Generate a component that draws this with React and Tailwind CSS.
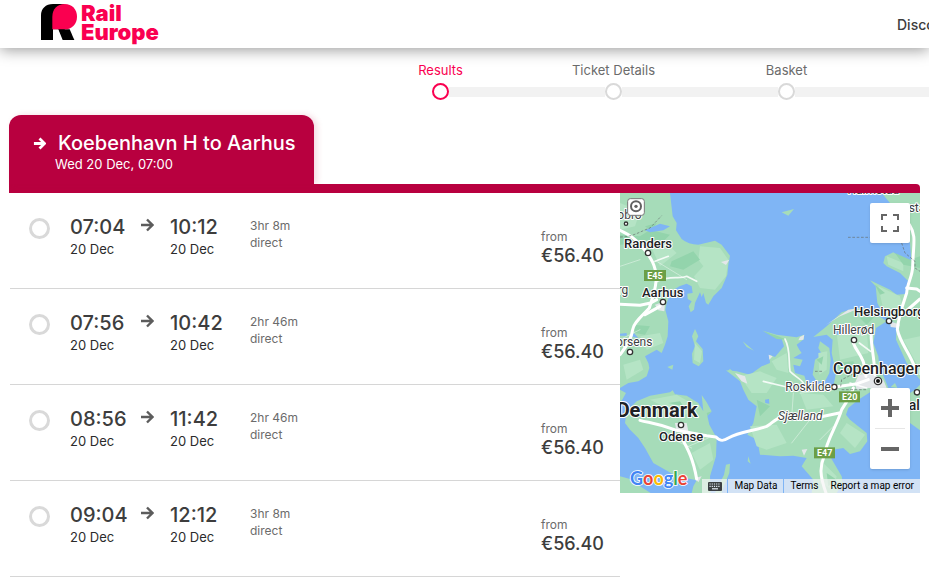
const steps = [
  { label: 'Results', active: true },
  { label: 'Ticket Details', active: false },
  { label: 'Basket', active: false },
];

const journeys = [
  { id: 1, depart: '07:04', arrive: '10:12', date: '20 Dec', duration: '3hr 8m', price: '€56.40' },
  { id: 2, depart: '07:56', arrive: '10:42', date: '20 Dec', duration: '2hr 46m', price: '€56.40' },
  { id: 3, depart: '08:56', arrive: '11:42', date: '20 Dec', duration: '2hr 46m', price: '€56.40' },
  { id: 4, depart: '09:04', arrive: '12:12', date: '20 Dec', duration: '3hr 8m', price: '€56.40' },
];

function Arrow({ className }) {
  return (
    <svg viewBox="0 0 14 14" className={className} fill="none" stroke="currentColor" aria-hidden="true">
      <path d="M1 7h11M7 1.5l5.5 5.5L7 12.5" />
    </svg>
  );
}

function Logo() {
  return (
    <a href="#" className="flex items-start gap-1 pt-1 text-[#fa0050]">
      <svg viewBox="0 0 108 108" className="size-9" aria-hidden="true">
        <path d="M0 108V34C0 14 14 0 36 0h34v75L100 108H65L52 76H36v32z" fill="#000" />
        <path d="M53 76h33l14 32H68z" fill="#000" />
        <path d="M34 76V38C34 15 49 0 71 0s37 16 37 38-15 38-37 38z" fill="#fa0050" />
      </svg>
      <span className="flex flex-col text-[22px] font-black leading-[19px]">
        <span>Rail</span>
        <span>Europe</span>
      </span>
    </a>
  );
}

function Header() {
  return (
    <header className="relative flex h-12 items-start justify-between bg-white pl-[41px] shadow-[0_2px_14px_rgba(0,0,0,0.4)]">
      <Logo />
      <nav className="w-8 overflow-hidden whitespace-nowrap pt-[15px] text-sm font-medium text-[#3d3d3d]">
        <a href="#">Discover</a>
      </nav>
    </header>
  );
}

function Stepper() {
  return (
    <ol className="flex overflow-hidden pl-[354px] pt-3">
      {steps.map((step, i) => (
        <li key={step.label} className="flex w-[173px] shrink-0 flex-col items-center">
          <span className={step.active ? 'pb-[2px] text-[13px] leading-[21px] text-[#fa0050]' : 'pb-[2px] text-[13px] leading-[21px] text-[#6b6b6b]'}>
            {step.label}
          </span>
          <div className="flex w-full items-center">
            <span className={i === 0 ? 'h-[10px] flex-1' : 'h-[10px] flex-1 bg-[#f2f2f2]'} />
            <span
              className={
                step.active
                  ? 'size-[17px] rounded-full border-2 border-[#fa0050] bg-white'
                  : 'size-[17px] rounded-full border-2 border-[#d9d9d9] bg-white'
              }
            />
            <span className="h-[10px] flex-1 bg-[#f2f2f2]" />
          </div>
        </li>
      ))}
      <li className="flex flex-1 flex-col justify-end" aria-hidden="true">
        <div className="flex h-[17px] items-center">
          <span className="h-[10px] flex-1 bg-[#f2f2f2]" />
        </div>
      </li>
    </ol>
  );
}

function Journey({ journey }) {
  return (
    <li className="border-b border-[#d6d6d6]">
      <label className="flex h-[95px] items-start pl-[19px] pr-4">
        <input
          type="radio"
          name="journey"
          className="mr-5 mt-[25px] size-[21px] shrink-0 appearance-none rounded-full border-3 border-[#d9d9d9] bg-white"
        />
        <span className="flex w-[70px] flex-col pt-5">
          <span className="text-xl leading-7 font-medium text-[#3d3d3d]">{journey.depart}</span>
          <span className="text-[13px] leading-4 text-[#2b2b2b]">{journey.date}</span>
        </span>
        <Arrow className="mr-4 mt-[25px] size-[14px] stroke-[2.4] text-[#5c5c5c]" />
        <span className="flex w-20 flex-col pt-5">
          <span className="text-xl leading-7 font-medium text-[#3d3d3d]">{journey.arrive}</span>
          <span className="text-[13px] leading-4 text-[#2b2b2b]">{journey.date}</span>
        </span>
        <span className="flex flex-col pt-6 text-xs leading-[17px] text-[#6b6b6b]">
          <span>{journey.duration}</span>
          <span>direct</span>
        </span>
        <span className="ml-auto flex flex-col pt-9">
          <span className="text-xs leading-4 text-[#6b6b6b]">from</span>
          <span className="text-lg leading-[22px] font-medium text-[#3d3d3d]">{journey.price}</span>
        </span>
      </label>
    </li>
  );
}

const roads = [
  'M0 112 C25 125 40 130 65 160 C90 190 112 220 108 265 C105 300 95 320 88 345 C65 370 40 390 38 410 C35 440 15 465 0 485',
  'M0 334 L60 337 L92 330 L110 320',
  'M120 340 L75 365',
  'M60 682 C90 690 110 690 170 712 L260 728 L288 732 C300 745 310 745 325 735 C360 715 400 715 440 700 C460 690 460 678 490 672 L600 672 L658 660',
  'M185 735 C205 770 220 800 230 858',
  'M700 585 L690 610 L665 650 C650 700 620 740 612 790 C600 820 598 845 618 900',
  'M645 582 L712 572 L745 560',
  'M700 450 C710 480 735 490 738 550',
  'M755 410 C748 440 762 480 765 545',
  'M868 95 C890 130 880 150 878 220 C878 250 862 270 860 300 C850 330 835 370 832 410 C840 450 870 480 885 525',
  'M860 285 L890 288 L900 295',
  'M852 360 L900 318',
];

const thinRoads = [
  'M105 205 L145 190 M112 265 C150 245 180 260 200 250 L230 265',
  'M495 438 C512 470 505 500 510 535 C525 550 545 560 550 570',
  'M430 565 L500 582 M718 450 L752 475 M690 570 L740 585',
];

const faintRoads =
  'M205 760L265 735M215 765L150 735M515 675L520 600M515 750L570 680M0 220L60 200M110 205L200 260M0 440L60 410M540 600L640 590M640 700L600 740';

function MapDrawing() {
  return (
    <svg viewBox="0 0 900 900" className="block h-full w-full" role="img" aria-label="Map">
      <rect width="900" height="900" fill="#7fb5f5" />
      <g fill="#a6dcb9">
        <path d="M0 0H150L158 70 170 90 168 112 185 138Q205 155 235 155L285 143 305 155 330 188 325 215 322 245 305 285 280 310 265 335 258 330 250 300 245 312 240 298 225 330 222 350 212 358 206 340 215 325 203 318 202 302 218 300 215 280 200 272 178 280 165 288 160 305 148 310 140 330 136 350 145 385 143 430 135 455 125 480 110 470 75 490 85 510 88 525 80 550 55 565 25 570 0 585Z" />
        <path d="M0 590L18 600 8 618 0 630Z" />
        <path d="M15 690L20 655 50 625 90 608 150 598 158 592 165 604 200 608 235 630 250 655 245 606 260 628 275 655 262 668 268 695 290 735 288 790 270 850 272 900 215 900 220 880 230 862 170 850 100 810 75 765 55 735 30 710Z" />
        <path d="M225 408L235 430 228 445 248 468 250 505 236 520 218 510 216 482 225 460 216 430Z" />
        <path d="M318 532L350 535 390 545 425 520 450 510 448 485 465 492 492 460 485 437 425 412 470 425 530 433 552 425 552 438 530 455 538 470 545 480 520 495 548 500 540 520 520 515 525 540 553 548 560 570 590 576 640 580 648 540 635 480 638 440 620 425 580 432 620 400 665 358 700 347 740 345 800 385 768 405 760 450 775 490 778 520 795 560 805 585 755 595 715 620 685 645 678 665 690 680 740 720 742 745 720 775 690 783 670 765 640 770 630 790 665 850 668 870 650 900H575L580 860 545 820 560 795 520 788 480 790 420 785 412 740 382 725 400 690 410 640 385 620 370 590 360 565Z" />
        <path d="M600 445L628 465 632 500 628 540 615 565 590 565 578 545 585 500 607 485 595 465Z" />
        <path d="M785 0L810 30 840 90 870 150 875 215 860 205 820 178 795 190 790 210 800 220 840 240 865 265 868 285 855 303 830 305 810 290 750 262 767 280 772 330 790 365 830 395 828 440 860 510 900 560V0Z" />
        <path d="M900 575L885 590 870 600V690L900 712Z" />
        <path d="M0 850L30 858 60 880 92 900H0ZM485 58L522 48 505 68ZM368 445L402 473 380 462ZM142 522L160 515 157 530ZM322 535L330 528 345 540ZM330 812L328 840 312 878 305 900H285L312 845 318 815ZM825 570L832 585 812 582ZM385 790L392 812 383 805Z" />
      </g>
      <g fill="#b5e4c5">
        <path d="M240 160L300 165 325 200 318 250 285 290 240 285 222 250 250 220 235 200ZM0 30L60 55 45 100 0 110ZM95 165L140 150 170 180 120 220ZM60 430L120 420 130 450 80 470ZM10 515L60 500 70 530 20 560Z" />
        <path d="M360 550L420 535 470 555 440 600 395 600ZM455 505L500 480 505 540 470 530ZM390 700L470 695 500 750 440 770 410 760ZM540 600L610 605 640 640 560 650ZM650 420L740 400 745 480 660 500ZM680 690L735 725 705 765 660 720ZM600 800L650 850 640 890 600 870ZM595 480L622 475 620 530 598 545Z" />
        <path d="M90 620L170 605 230 640 190 670ZM215 780L270 750 280 800 240 830ZM225 450L246 475 240 510 222 500ZM775 280L840 310 850 350 790 350ZM800 190L850 210 850 235 805 215ZM850 440L900 430V530Z" />
      </g>
      <g fill="#93d4ac">
        <path d="M0 125L60 130 90 110 150 125 130 145 70 150 0 155ZM155 205L220 175 240 200 190 230 150 220ZM75 100L110 90 95 115ZM40 395L90 400 75 425 45 420ZM430 415L475 430 500 440 470 438ZM650 510L700 505 710 530 660 535ZM500 560L530 575 520 590ZM620 840L650 860 625 880Z" />
        <path d="M825 180L870 200 900 190V225L850 215ZM410 620L450 640 420 670ZM720 375L765 370 740 395ZM590 500L610 490 605 515ZM145 630L180 625 190 640ZM260 660L275 655 262 668ZM765 275L795 300 780 305Z" />
      </g>
      <g fill="#e4e7ea">
        <path d="M303 207L328 200 318 216ZM105 335L135 325 133 355 115 352ZM705 570L715 545 755 540 790 560 800 585 745 585 710 590ZM345 540L375 550 382 572 365 565ZM540 432L553 425 550 440 535 442ZM165 690L200 690 205 715 170 718ZM545 770L562 768 552 788ZM810 385L840 395 835 405 812 402ZM225 855L245 850 235 868ZM446 485L458 490 448 500ZM618 395L685 350 720 345 660 370Z" />
      </g>
      <path d="M75 112L120 92 150 100 130 112 90 118ZM435 620L447 618 448 632 436 630ZM648 415L662 410 665 425 650 425ZM30 430L42 420 55 435ZM0 422L20 420V428H0Z" fill="#7fb5f5" />
      <g fill="none" stroke="#fff" strokeLinecap="round" strokeLinejoin="round">
        <path d={faintRoads} strokeWidth="3" opacity="0.4" />
        {thinRoads.map((d) => <path key={d} d={d} strokeWidth="5" opacity="0.85" />)}
        {roads.map((d) => <path key={d} d={d} strokeWidth="9" />)}
      </g>
      <g fill="none" stroke="#666f70" strokeWidth="2" strokeDasharray="8 5">
        <path d="M0 132C40 132 60 115 90 105L125 68M684 133H750M845 150L855 180 885 205 885 225 900 235M662 580L665 560 705 540M665 590H740M585 535H608" />
      </g>
      <g fill="#fff" stroke="#333" strokeWidth="4">
        <circle cx="18" cy="92" r="5" />
        <circle cx="84" cy="180" r="8" />
        <circle cx="129" cy="327" r="8" />
        <circle cx="30" cy="477" r="8" />
        <circle cx="183" cy="696" r="8" />
        <circle cx="702" cy="441" r="8" />
        <circle cx="807" cy="384" r="8" />
        <circle cx="643" cy="582" r="8" />
        <circle cx="891" cy="598" r="8" />
        <circle cx="774" cy="564" r="11" />
      </g>
      <circle cx="774" cy="564" r="6" fill="#111" />
      <g className="font-['Roboto',sans-serif]" fill="#202124" stroke="#fff" strokeWidth="6" strokeLinejoin="round" paintOrder="stroke">
        <g fontSize="39" fontWeight="500">
          <text x="12" y="164">Randers</text>
          <text x="66" y="311">Aarhus</text>
          <text x="117" y="743">Odense</text>
          <text x="702" y="368">Helsingborg</text>
        </g>
        <g fontSize="36" fill="#3c4043">
          <text x="65" y="78" textAnchor="end">Hobro</text>
          <text x="25" y="304" textAnchor="end">Viborg</text>
          <text x="97" y="459" textAnchor="end">Horsens</text>
          <text x="639" y="423">Hillerød</text>
          <text x="496" y="594">Roskilde</text>
          <text x="866" y="58">stad</text>
          <text x="838" y="4" textAnchor="end">Halmstad</text>
          <text x="474" y="682" fontStyle="italic">Sjælland</text>
        </g>
        <text x="639" y="542" fontSize="48" fontWeight="500">Copenhagen</text>
        <text x="866" y="650" fontSize="42" fontWeight="500">alm</text>
        <text x="233" y="672" fontSize="60" fontWeight="700" textAnchor="end">Denmark</text>
      </g>
      <g className="font-['Roboto',sans-serif]" fontSize="27" fontWeight="700" textAnchor="middle">
        <rect x="72" y="231" width="66" height="33" fill="#6c9f46" />
        <text x="105" y="257" fill="#fff">E45</text>
        <rect x="657" y="595" width="63" height="33" fill="#6c9f46" />
        <text x="689" y="621" fill="#fff">E20</text>
        <rect x="582" y="763" width="63" height="33" fill="#6c9f46" />
        <text x="614" y="789" fill="#fff">E47</text>
      </g>
      <rect x="23" y="17" width="50" height="50" rx="8" fill="#fff" stroke="#777" strokeWidth="3" />
      <circle cx="48" cy="40" r="15" fill="none" stroke="#616161" strokeWidth="6" />
      <circle cx="48" cy="40" r="5" fill="#616161" />
      <text x="30" y="877" className="font-['Lato',sans-serif]" fontSize="54" fontWeight="700" stroke="#fff" strokeWidth="5" paintOrder="stroke">
        <tspan fill="#4285f4">G</tspan><tspan fill="#ea4335">o</tspan><tspan fill="#fbbc05">o</tspan><tspan fill="#4285f4">g</tspan><tspan fill="#34a853">l</tspan><tspan fill="#ea4335">e</tspan>
      </text>
    </svg>
  );
}

function RouteMap() {
  return (
    <aside className="relative aspect-square w-[300px] shrink-0 overflow-hidden">
      <MapDrawing />
      <button
        type="button"
        aria-label="Toggle fullscreen view"
        className="absolute right-[10px] top-[10px] flex size-10 items-center justify-center rounded-xs bg-white shadow"
      >
        <svg viewBox="0 0 18 18" className="size-[18px]" fill="#666" aria-hidden="true">
          <path d="M0 0v6h2V2h4V0H0zm16 0h-4v2h4v4h2V0h-2zm0 16h-4v2h6v-6h-2v4zM2 12H0v6h6v-2H2v-4z" />
        </svg>
      </button>
      <div className="absolute bottom-6 right-[10px] flex w-10 flex-col items-center rounded-xs bg-white shadow">
        <button type="button" aria-label="Zoom in" className="flex size-10 items-center justify-center">
          <svg viewBox="0 0 18 18" className="size-[18px]" fill="#666" aria-hidden="true">
            <path d="M7 0h4v7h7v4h-7v7H7v-7H0V7h7z" />
          </svg>
        </button>
        <span className="h-px w-[30px] bg-[#e6e6e6]" />
        <button type="button" aria-label="Zoom out" className="flex size-10 items-center justify-center">
          <svg viewBox="0 0 18 18" className="size-[18px]" fill="#666" aria-hidden="true">
            <path d="M0 7h18v4H0z" />
          </svg>
        </button>
      </div>
      <div className="absolute bottom-0 right-0 flex h-[14px] gap-px font-['Roboto',sans-serif] text-[10px] leading-[14px] text-black">
        <button type="button" aria-label="Keyboard shortcuts" className="flex w-[25px] items-center justify-center bg-[#f5f5f5]/70">
          <svg viewBox="0 0 14 9" className="h-[9px] w-[14px]" aria-hidden="true">
            <rect width="14" height="9" rx="1" fill="#3c4043" />
            <path d="M1.5 2h11M1.5 4.3h11" stroke="#e5edf8" strokeWidth="1.2" strokeDasharray="1.2 1" />
            <path d="M4 6.8h6" stroke="#e5edf8" strokeWidth="1.2" />
          </svg>
        </button>
        <button type="button" className="bg-[#f5f5f5]/70 px-[6px]">Map Data</button>
        <a href="#" className="bg-[#f5f5f5]/70 px-[6px]">Terms</a>
        <a href="#" className="-ml-px bg-[#f5f5f5]/70 px-[6px]">Report a map error</a>
      </div>
    </aside>
  );
}

export default function App() {
  return (
    <div className="h-screen overflow-hidden bg-white font-['Inter',sans-serif]">
      <Header />
      <Stepper />
      <main className="mx-[9px] mt-[15px]">
        <div className="flex">
          <div className="w-[305px] rounded-t-xl bg-[#b8003f] pl-6 pt-[15px] text-white shadow-[3px_0_6px_rgba(184,0,63,0.15)]">
            <h1 className="flex items-center text-xl leading-[26px] font-medium">
              <Arrow className="mr-3 size-[13px] stroke-3" />
              Koebenhavn H to Aarhus
            </h1>
            <p className="pb-3 pl-[22px] text-[13px] leading-4">Wed 20 Dec, 07:00</p>
          </div>
        </div>
        <div className="h-[9px] rounded-tr bg-[#b8003f]" />
        <div className="flex items-start">
          <ul className="ml-px flex-1">
            {journeys.map((journey) => (
              <Journey key={journey.id} journey={journey} />
            ))}
          </ul>
          <RouteMap />
        </div>
      </main>
    </div>
  );
}
